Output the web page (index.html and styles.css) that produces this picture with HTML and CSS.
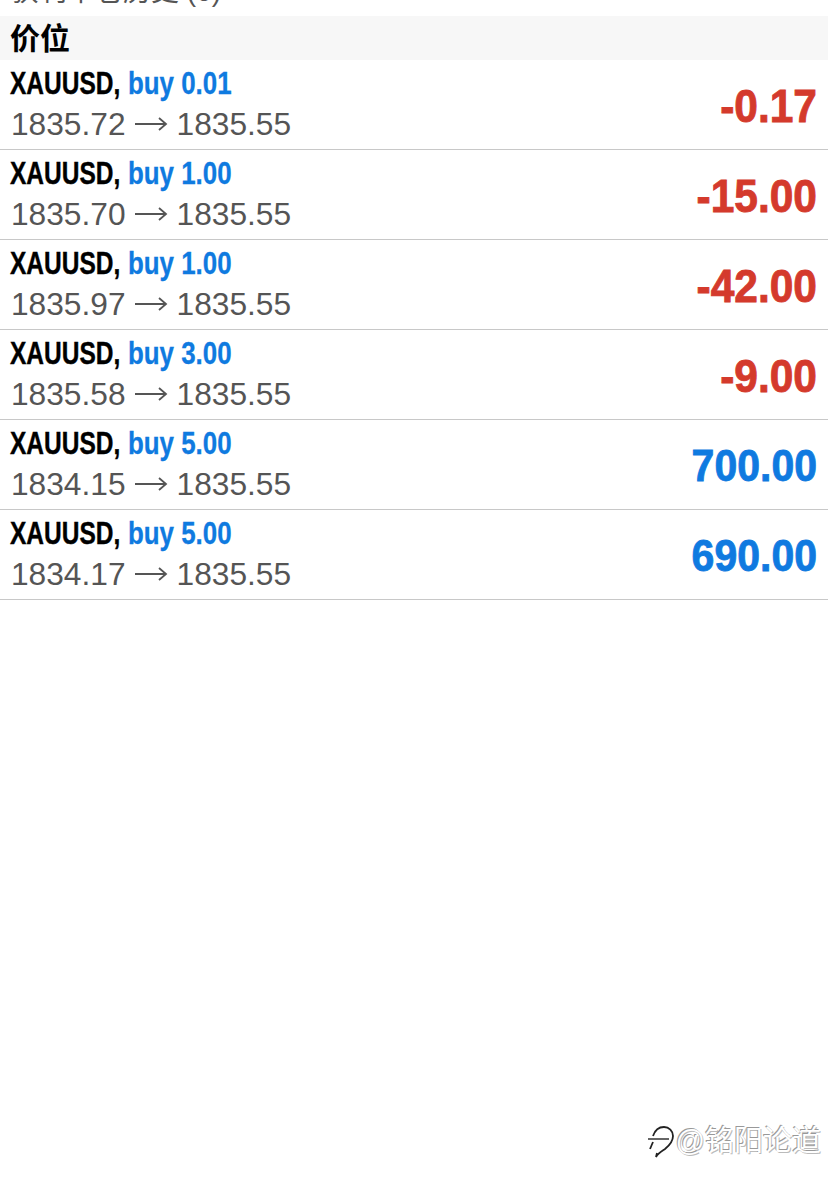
FILE: index.html
```html
<!DOCTYPE html>
<html lang="zh-CN">
<head>
    <meta charset="UTF-8">
    <title>价位</title>
    <link rel="stylesheet" href="styles.css">
</head>
<body>
    <svg width="0" height="0" class="defs">
        <symbol id="arrow" viewBox="0 0 34 16">
            <path d="M1 8 H32 M25 2 L32 8 L25 14" fill="none" stroke="#555" stroke-width="1.8"/>
        </symbol>
    </svg>

    <div class="clipped-title"><span>获利平仓历史 (6)</span></div>
    <div class="section-head">价位</div>

    <div class="trade">
        <div class="trade-info">
            <div class="trade-name"><span class="symbol">XAUUSD,</span><span class="side">buy 0.01</span></div>
            <div class="trade-price">1835.72<svg class="arrow"><use href="#arrow"/></svg>1835.55</div>
        </div>
        <div class="profit loss">-0.17</div>
    </div>
    <div class="trade">
        <div class="trade-info">
            <div class="trade-name"><span class="symbol">XAUUSD,</span><span class="side">buy 1.00</span></div>
            <div class="trade-price">1835.70<svg class="arrow"><use href="#arrow"/></svg>1835.55</div>
        </div>
        <div class="profit loss">-15.00</div>
    </div>
    <div class="trade">
        <div class="trade-info">
            <div class="trade-name"><span class="symbol">XAUUSD,</span><span class="side">buy 1.00</span></div>
            <div class="trade-price">1835.97<svg class="arrow"><use href="#arrow"/></svg>1835.55</div>
        </div>
        <div class="profit loss">-42.00</div>
    </div>
    <div class="trade">
        <div class="trade-info">
            <div class="trade-name"><span class="symbol">XAUUSD,</span><span class="side">buy 3.00</span></div>
            <div class="trade-price">1835.58<svg class="arrow"><use href="#arrow"/></svg>1835.55</div>
        </div>
        <div class="profit loss">-9.00</div>
    </div>
    <div class="trade">
        <div class="trade-info">
            <div class="trade-name"><span class="symbol">XAUUSD,</span><span class="side">buy 5.00</span></div>
            <div class="trade-price">1834.15<svg class="arrow"><use href="#arrow"/></svg>1835.55</div>
        </div>
        <div class="profit gain">700.00</div>
    </div>
    <div class="trade">
        <div class="trade-info">
            <div class="trade-name"><span class="symbol">XAUUSD,</span><span class="side">buy 5.00</span></div>
            <div class="trade-price">1834.17<svg class="arrow"><use href="#arrow"/></svg>1835.55</div>
        </div>
        <div class="profit gain">690.00</div>
    </div>

    <!-- watermark sits over the empty page -->
    <div class="watermark">
        <svg class="watermark-icon" width="30" height="36" viewBox="0 0 30 36" fill="none">
            <path d="M8 13 C10 7 14 4 19 4 C24 4 28 8 28 13 C28 18 25 22 20 26 C17 28 13 30 11 34 L12 30" stroke="#222" stroke-width="1.8"/>
            <path d="M3 16 H24" stroke="#333" stroke-width="1.5"/>
            <path d="M8 19 L5 26" stroke="#222" stroke-width="1.8"/>
        </svg>
        <span class="watermark-text">@铭阳论道</span>
    </div>
</body>
</html>
```

FILE: styles.css
```css
* {
    margin: 0;
    padding: 0;
    box-sizing: border-box;
}

body {
    position: relative;
    height: 1190px;
    overflow: hidden;
    background: #fff;
    font-family: "Liberation Sans", "Noto Sans CJK SC", sans-serif;
}

.defs {
    position: absolute;
}

.clipped-title {
    height: 16px;
    padding-left: 11px;
    overflow: hidden;
    font-size: 28px;
    color: #555;
}

.clipped-title span {
    display: block;
    margin-top: -22px;
    line-height: 28px;
}

.section-head {
    height: 44px;
    padding-left: 10px;
    background: #f7f7f7;
    font-size: 30px;
    font-weight: bold;
    line-height: 46px;
    color: #000;
}

.trade {
    display: flex;
    justify-content: space-between;
    align-items: center;
    height: 90px;
    padding: 0 11px 0 11px;
    border-bottom: 1px solid #c8c8c8;
}

.trade:last-child {
    height: 91px;
}

.trade-info {
    display: flex;
    flex-direction: column;
    margin-top: -1px;
}

.trade-name {
    display: flex;
    height: 40px;
    margin-left: -1px;
    font-size: 31px;
    font-weight: bold;
    line-height: 40px;
    white-space: nowrap;
}

.symbol {
    width: 118px;
    color: #000;
    -webkit-text-stroke: 0.4px #000;
    transform: scaleX(0.79);
    transform-origin: left center;
}

.side {
    color: #0f7ae0;
    -webkit-text-stroke: 0.3px #0f7ae0;
    transform: scaleX(0.835);
    transform-origin: left center;
}

.trade-price {
    display: flex;
    align-items: center;
    gap: 8.5px;
    font-size: 31.7px;
    line-height: 40px;
    color: #555;
    white-space: nowrap;
}

.arrow {
    width: 34px;
    height: 16px;
}

.profit {
    font-weight: bold;
    margin-top: 4px;
    transform: scaleY(1.1);
}

.loss {
    font-size: 42.5px;
    color: #d43a2c;
    -webkit-text-stroke: 0.8px #d43a2c;
}

.gain {
    font-size: 41px;
    color: #0f7ae0;
    -webkit-text-stroke: 0.8px #0f7ae0;
}

.watermark {
    position: absolute;
    right: 7px;
    top: 1123px;
    display: flex;
    align-items: flex-start;
    gap: 1px;
}

.watermark-text {
    font-size: 29px;
    line-height: 36px;
    color: #fff;
    text-shadow: -1px -1px 0 #999, 1px 1px 0 #bbb;
}
```
